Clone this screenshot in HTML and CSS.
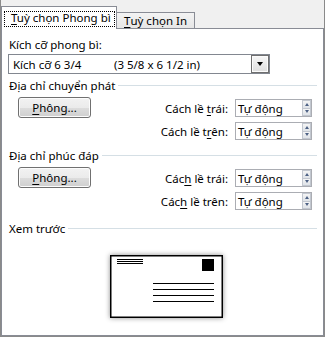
FILE: index.html
```html
<!DOCTYPE html>
<html lang="vi">
<head>
<meta charset="utf-8">
<title>Tuỳ chọn Phong bì</title>
<link rel="stylesheet" href="styles.css">
</head>
<body>
<div class="window">
  <div class="tabstrip">
    <div class="tab tab-active"><span class="focus"><u>T</u>uỳ chọn Phong bì</span></div>
    <div class="tab tab-idle"><u>T</u>uỳ chọn In</div>
    <div class="tab-rest"></div>
  </div>
  <div class="panel">
    <div class="field-label">Kích cỡ phong bì:</div>
    <div class="select">
      <span class="sel-a">Kích cỡ 6 3/4</span>
      <span class="sel-b">(3 5/8 x 6 1/2 in)</span>
      <span class="sel-btn"><i class="tri-down"></i></span>
    </div>

    <div class="group-head">Địa chỉ chuyển phát</div>
    <div class="group-body">
      <div class="btn"><u>P</u>hông...</div>
      <div class="margins">
        <div class="m-label">Cách lề <u>t</u>rái:</div>
        <div class="spin"><span class="spin-val">Tự động</span><span class="spin-arrows"><span class="sa up"><i></i></span><span class="sa down"><i></i></span></span></div>
        <div class="m-label">Cách lề t<u>r</u>ên:</div>
        <div class="spin"><span class="spin-val">Tự động</span><span class="spin-arrows"><span class="sa up"><i></i></span><span class="sa down"><i></i></span></span></div>
      </div>
    </div>

    <div class="group-head gh-2">Địa chỉ phúc đáp</div>
    <div class="group-body">
      <div class="btn"><u>P</u>hông...</div>
      <div class="margins">
        <div class="m-label">Các<u>h</u> lề trái:</div>
        <div class="spin"><span class="spin-val">Tự động</span><span class="spin-arrows"><span class="sa up"><i></i></span><span class="sa down"><i></i></span></span></div>
        <div class="m-label">Các<u>h</u> lề trên:</div>
        <div class="spin"><span class="spin-val">Tự động</span><span class="spin-arrows"><span class="sa up"><i></i></span><span class="sa down"><i></i></span></span></div>
      </div>
    </div>

    <div class="group-head gh-3">Xem trước</div>
    <div class="preview">
      <svg class="envelope" width="113" height="63" viewBox="0 0 113 63">
        <rect x="0.75" y="0.75" width="111.5" height="61.5" fill="#fff" stroke="#000" stroke-width="1.5"/>
        <g stroke="#000" stroke-width="1">
          <line x1="7" y1="4.5" x2="33" y2="4.5"/>
          <line x1="7" y1="6.5" x2="33" y2="6.5"/>
          <line x1="7" y1="8.5" x2="33" y2="8.5"/>
        </g>
        <rect x="92" y="4" width="12" height="12" fill="#000"/>
        <g stroke="#000" stroke-width="1">
          <line x1="43" y1="28.5" x2="104" y2="28.5"/>
          <line x1="43" y1="34.5" x2="104" y2="34.5"/>
          <line x1="43" y1="40.5" x2="104" y2="40.5"/>
          <line x1="43" y1="46.5" x2="104" y2="46.5"/>
        </g>
      </svg>
    </div>
  </div>
</div>
</body>
</html>
```

FILE: styles.css
```css
html, body {
  margin: 0;
  padding: 0;
}

body {
  width: 325px;
  height: 337px;
  overflow: hidden;
  background: #f0f0f0;
  font-family: "Noto Sans", "Open Sans", sans-serif;
  font-size: 11.5px;
  line-height: 15px;
  color: #000;
}

u {
  text-decoration: underline;
  text-underline-offset: 2px;
}

.window {
  box-sizing: border-box;
  width: 325px;
  height: 337px;
  display: flex;
  flex-direction: column;
  border-left: 1px solid #8a8a8a;
  border-right: 1px solid #8a8a8a;
  border-bottom: 1px solid #8a8a8a;
}

/* ---------- tabs ---------- */
.tabstrip {
  display: flex;
  align-items: flex-end;
  height: 29px;
  flex: none;
}

.tab {
  box-sizing: border-box;
  display: flex;
  align-items: center;
  white-space: nowrap;
}

.tab-active {
  width: 116px;
  height: 23px;
  background: #fff;
  border: 1px solid #898c95;
  border-bottom: none;
  padding: 0 0 0 2px;
}

.focus {
  box-sizing: border-box;
  display: block;
  width: 111px;
  height: 16px;
  line-height: 14px;
  padding-left: 7px;
  outline: 1px dotted #000;
  outline-offset: -1px;
  margin-top: 1px;
}

.tab-idle {
  width: 78px;
  height: 17px;
  padding-left: 7px;
  border-top: 1px solid #898c95;
  border-right: 1px solid #898c95;
  border-bottom: 1px solid #898c95;
  background: linear-gradient(#f3f3f3, #e6e6e6);
}

.tab-rest {
  flex: 1;
  height: 0;
  border-bottom: 1px solid #898c95;
}

/* ---------- panel ---------- */
.panel {
  flex: 1;
  display: flex;
  flex-direction: column;
  background: #fff;
  border-left: 1px solid #898c95;
  border-right: 1px solid #898c95;
  border-bottom: 1px solid #898c95;
  padding: 8px 6px 0 6px;
  min-height: 0;
}

.field-label {
  padding-left: 1px;
  height: 15px;
}

.select {
  box-sizing: border-box;
  display: flex;
  align-items: center;
  width: 262px;
  height: 20px;
  margin-top: 2px;
  border: 1px solid #828790;
  background: #fff;
}

.sel-a {
  box-sizing: border-box;
  flex: none;
  width: 105px;
  padding-left: 4px;
  white-space: nowrap;
}

.sel-b {
  flex: 1;
  white-space: nowrap;
}

.sel-btn {
  box-sizing: border-box;
  flex: none;
  width: 18px;
  height: 18px;
  display: flex;
  align-items: center;
  justify-content: center;
  border: 1px solid #6f6f6f;
  box-shadow: inset 0 0 0 1px #fbfbfb;
  background: linear-gradient(#f6f6f6, #dedede);
}

.tri-down {
  width: 0;
  height: 0;
  border-left: 3.5px solid transparent;
  border-right: 3.5px solid transparent;
  border-top: 4px solid #000;
}

/* ---------- groups ---------- */
.group-head {
  display: flex;
  align-items: center;
  gap: 3px;
  height: 15px;
  margin-top: 4px;
  padding-left: 1px;
  white-space: nowrap;
}

.group-head::after {
  content: "";
  flex: 1;
  height: 1px;
  background: #d5dfe5;
}

.gh-2 {
  margin-top: 8px;
}

.gh-3 {
  margin-top: 11px;
}

.group-body {
  display: flex;
  justify-content: space-between;
  align-items: flex-start;
  margin-top: 6px;
  padding-left: 10px;
  padding-right: 5px;
}

.btn {
  box-sizing: border-box;
  width: 73px;
  height: 21px;
  margin-top: -2px;
  display: flex;
  align-items: center;
  justify-content: center;
  border: 1px solid #707070;
  border-radius: 3px;
  background: linear-gradient(#f2f2f2 0%, #ebebeb 50%, #dddddd 51%, #cfcfcf 100%);
  box-shadow: inset 0 0 0 1px #fcfcfc;
}

.margins {
  display: grid;
  grid-template-columns: auto 77px;
  column-gap: 7px;
  row-gap: 5px;
  align-items: center;
}

.m-label {
  justify-self: end;
  white-space: nowrap;
}

.spin {
  box-sizing: border-box;
  display: flex;
  align-items: center;
  height: 18px;
  border: 1px solid #abadb3;
  background: #fff;
  padding: 0 0 0 2px;
}

.spin-val {
  flex: 1;
  white-space: nowrap;
}

.spin-arrows {
  display: flex;
  flex-direction: column;
  width: 9px;
  height: 16px;
}

.sa {
  box-sizing: border-box;
  flex: 1;
  display: flex;
  align-items: center;
  justify-content: center;
  border: 1px solid #c2c7cf;
  background: linear-gradient(#f4f4f4, #dfe3e8);
}

.sa + .sa {
  border-top: none;
}

.sa i {
  width: 0;
  height: 0;
  border-left: 2.5px solid transparent;
  border-right: 2.5px solid transparent;
}

.up i {
  border-bottom: 3px solid #4d6185;
}

.down i {
  border-top: 3px solid #4d6185;
}

/* ---------- preview ---------- */
.preview {
  margin-top: 19px;
  padding-left: 102px;
}

.envelope {
  display: block;
  box-shadow: 0 0 5px rgba(0, 0, 0, 0.45);
}
```
